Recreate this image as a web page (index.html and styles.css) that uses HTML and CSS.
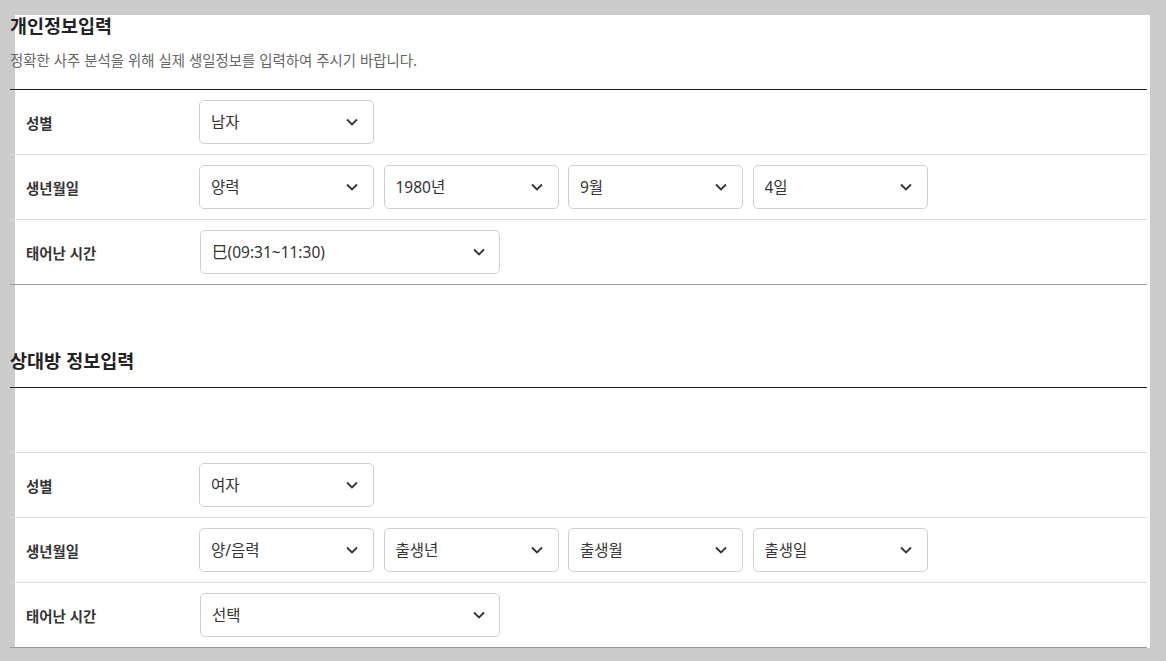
FILE: index.html
```html
<!DOCTYPE html>
<html lang="ko">
<head>
	<meta charset="UTF-8">
	<title>사주 정보입력</title>
	<link rel="stylesheet" href="styles.css">
</head>
<body>

	<div class="panel">
		<div class="inner">
			<h2 class="tit">개인정보입력</h2>
			<p class="desc">정확한 사주 분석을 위해 실제 생일정보를 입력하여 주시기 바랍니다.</p>
			<div class="form">
				<div class="row">
					<div class="th">성별</div>
					<div class="td">
						<div class="sel">
							<select><option>남자</option><option>여자</option></select>
							<svg class="arrow" width="12" height="8" viewBox="0 0 12 8"><path d="M1 1.5L6 6.5L11 1.5" fill="none" stroke="#333" stroke-width="1.8"/></svg>
						</div>
					</div>
				</div>
				<div class="row">
					<div class="th">생년월일</div>
					<div class="td">
						<div class="sel">
							<select><option>양력</option><option>음력</option></select>
							<svg class="arrow" width="12" height="8" viewBox="0 0 12 8"><path d="M1 1.5L6 6.5L11 1.5" fill="none" stroke="#333" stroke-width="1.8"/></svg>
						</div>
						<div class="sel">
							<select><option>1980년</option></select>
							<svg class="arrow" width="12" height="8" viewBox="0 0 12 8"><path d="M1 1.5L6 6.5L11 1.5" fill="none" stroke="#333" stroke-width="1.8"/></svg>
						</div>
						<div class="sel">
							<select><option>9월</option></select>
							<svg class="arrow" width="12" height="8" viewBox="0 0 12 8"><path d="M1 1.5L6 6.5L11 1.5" fill="none" stroke="#333" stroke-width="1.8"/></svg>
						</div>
						<div class="sel">
							<select><option>4일</option></select>
							<svg class="arrow" width="12" height="8" viewBox="0 0 12 8"><path d="M1 1.5L6 6.5L11 1.5" fill="none" stroke="#333" stroke-width="1.8"/></svg>
						</div>
					</div>
				</div>
				<div class="row">
					<div class="th">태어난 시간</div>
					<div class="td">
						<div class="sel sel-time">
							<select><option>巳(09:31~11:30)</option></select>
							<svg class="arrow" width="12" height="8" viewBox="0 0 12 8"><path d="M1 1.5L6 6.5L11 1.5" fill="none" stroke="#333" stroke-width="1.8"/></svg>
						</div>
					</div>
				</div>
			</div>

			<h2 class="tit tit2">상대방 정보입력</h2>
			<div class="form">
				<div class="row row-empty"></div>
				<div class="row">
					<div class="th">성별</div>
					<div class="td">
						<div class="sel">
							<select><option>여자</option><option>남자</option></select>
							<svg class="arrow" width="12" height="8" viewBox="0 0 12 8"><path d="M1 1.5L6 6.5L11 1.5" fill="none" stroke="#333" stroke-width="1.8"/></svg>
						</div>
					</div>
				</div>
				<div class="row">
					<div class="th">생년월일</div>
					<div class="td">
						<div class="sel">
							<select><option>양/음력</option></select>
							<svg class="arrow" width="12" height="8" viewBox="0 0 12 8"><path d="M1 1.5L6 6.5L11 1.5" fill="none" stroke="#333" stroke-width="1.8"/></svg>
						</div>
						<div class="sel">
							<select><option>출생년</option></select>
							<svg class="arrow" width="12" height="8" viewBox="0 0 12 8"><path d="M1 1.5L6 6.5L11 1.5" fill="none" stroke="#333" stroke-width="1.8"/></svg>
						</div>
						<div class="sel">
							<select><option>출생월</option></select>
							<svg class="arrow" width="12" height="8" viewBox="0 0 12 8"><path d="M1 1.5L6 6.5L11 1.5" fill="none" stroke="#333" stroke-width="1.8"/></svg>
						</div>
						<div class="sel">
							<select><option>출생일</option></select>
							<svg class="arrow" width="12" height="8" viewBox="0 0 12 8"><path d="M1 1.5L6 6.5L11 1.5" fill="none" stroke="#333" stroke-width="1.8"/></svg>
						</div>
					</div>
				</div>
				<div class="row">
					<div class="th">태어난 시간</div>
					<div class="td">
						<div class="sel sel-time">
							<select><option>선택</option></select>
							<svg class="arrow" width="12" height="8" viewBox="0 0 12 8"><path d="M1 1.5L6 6.5L11 1.5" fill="none" stroke="#333" stroke-width="1.8"/></svg>
						</div>
					</div>
				</div>
			</div>
		</div>
	</div>

</body>
</html>
```

FILE: styles.css
```css
body{margin:0;background:#cccccc;font-family:"Noto Sans CJK KR","Noto Sans",sans-serif;color:#333;}
.panel{margin:15px 16px 0 15px;background:#fff;}
.inner{margin:0 3px 0 -5px;}
.tit{margin:0;font-size:18.5px;line-height:20px;font-weight:bold;color:#222;}
.tit2{padding-top:65px;margin-bottom:17px;}
.desc{margin:15px 0 19px;font-size:14.4px;line-height:20px;color:#666;}
.form{border-top:1px solid #222;}
.row{display:flex;align-items:center;height:64px;border-bottom:1px solid #dddddd;}
.form .row:last-child{border-bottom-color:#999;}
.th{width:173px;padding-left:16px;font-size:14.4px;font-weight:bold;color:#333;}
.td{display:flex;gap:9.5px;}
.sel{position:relative;width:175px;height:44px;}
.sel select{width:100%;height:100%;-webkit-appearance:none;appearance:none;border:1px solid #cfcfcf;border-radius:5px;background:#fff;padding:0 11px;font-family:"Noto Sans","Noto Sans CJK KR",sans-serif;font-size:15.5px;color:#333;outline:none;}
.sel .arrow{position:absolute;right:16px;top:18px;pointer-events:none;}
.sel-time{width:300px;margin-left:1px;}
.sel-time .arrow{right:15px;}
```
